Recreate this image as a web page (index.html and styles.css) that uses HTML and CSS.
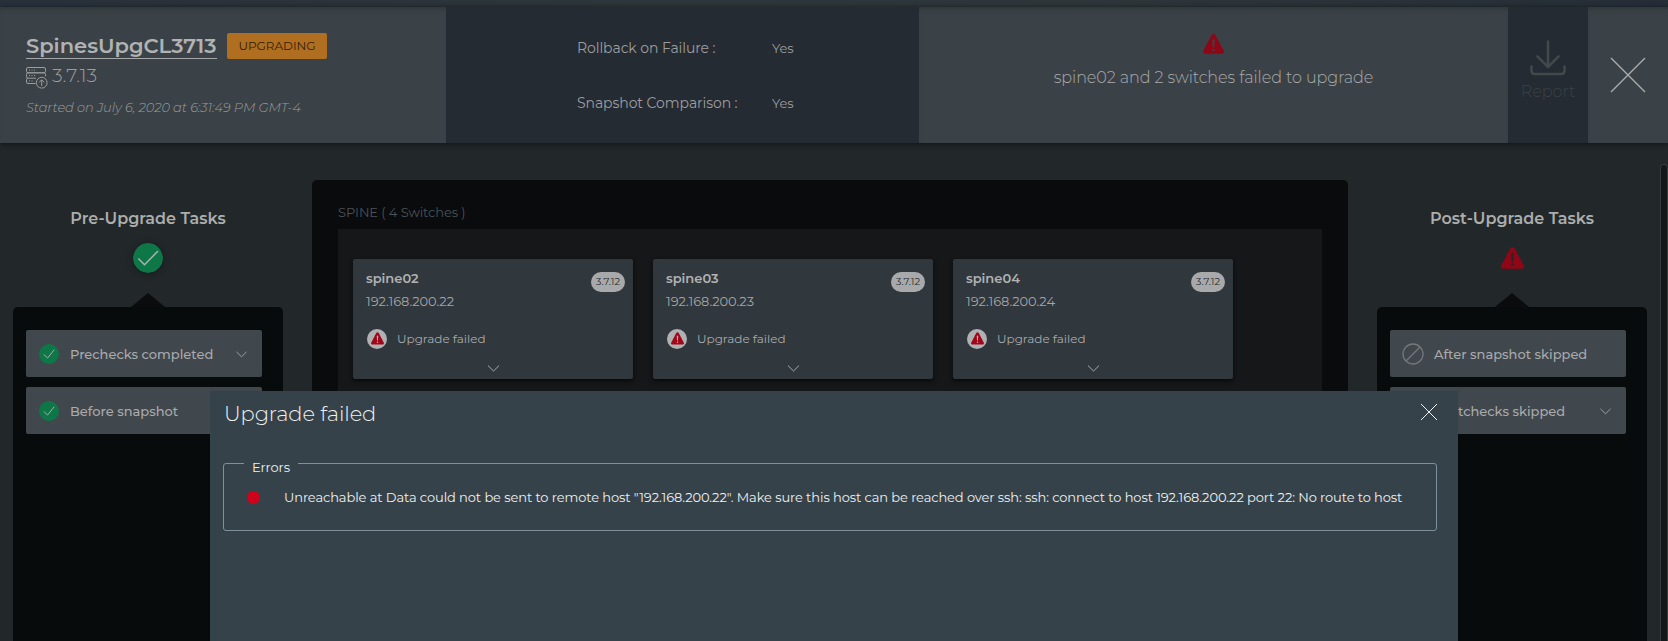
FILE: index.html
```html
<!DOCTYPE html>
<html lang="en">
<head>
<meta charset="utf-8">
<title>Upgrade job</title>
<link rel="stylesheet" href="styles.css">
</head>
<body>
<svg class="defs" width="0" height="0">
  <symbol id="warn" viewBox="0 0 22 21"><path fill="currentColor" fill-rule="evenodd" d="M8.9 1.3a2.4 2.4 0 0 1 4.2 0l8.6 16.2c.8 1.6-.2 3.2-2 3.2H2.3c-1.800 0-2.800-1.600-2-3.200zM9.800 6.600l.3 6.600a.9.9 0 0 0 1.800 0l.3-6.600a1.200 1.200 0 0 0-2.400 0zM11 15.400a1.300 1.300 0 1 0 0 2.600 1.300 1.300 0 0 0 0-2.600z"/></symbol>
  <symbol id="check" viewBox="0 0 30 30"><circle cx="15" cy="15" r="15" fill="#0d7748"/><path d="M5.800 16l5.700 5.800L24.500 8.500" fill="none" stroke="currentColor" stroke-width="1.500" stroke-linecap="round"/></symbol>
  <symbol id="check-sm" viewBox="0 0 20 20"><circle cx="10" cy="10" r="10" fill="#0d7748"/><path d="M5 10.700l3.600 3.300L15 6" fill="none" stroke="currentColor" stroke-width="1" stroke-linecap="round"/></symbol>
  <symbol id="chev" viewBox="0 0 12 7"><path d="M.5.6L6 6 11.500.6" fill="none" stroke="currentColor" stroke-width="1"/></symbol>
</svg>
<div class="page">
  <header class="header">
    <section class="job">
      <div class="job-top"><h1 class="job-name">SpinesUpgCL3713</h1><span class="status">UPGRADING</span></div>
      <div class="version">
        <svg width="22" height="22" viewBox="0 0 22 22" fill="none" stroke="currentColor" stroke-width="1"><rect x=".5" y=".5" width="19" height="5.300" rx="1.500"/><path d="M10 11.200H2A1.500 1.500 0 0 1 .5 9.700V7.300A1.500 1.500 0 0 1 2 5.800h16a1.500 1.500 0 0 1 1.500 1.500v2M9.500 16.500H2A1.500 1.500 0 0 1 .5 15v-2.300A1.500 1.500 0 0 1 2 11.200"/><path d="M3 3.200h1M5.500 3.200h1M8 3.200h1M3 8.500h1M5.500 8.500h1M8 8.500h1M3 13.900h1M5.500 13.900h1"/><circle cx="15.700" cy="15.700" r="5.400"/><path d="M15.700 19v-6M13.200 15.300l2.500-2.500 2.500 2.500"/></svg>
        <span>3.7.13</span>
      </div>
      <div class="started">Started on July 6, 2020 at 6:31:49 PM GMT-4</div>
    </section>
    <section class="options">
      <span>Rollback on Failure :</span><span class="yes">Yes</span>
      <span>Snapshot Comparison :</span><span class="yes">Yes</span>
    </section>
    <section class="result">
      <svg class="red" width="21" height="20"><use href="#warn"/></svg>
      <span class="result-text">spine02 and 2 switches failed to upgrade</span>
    </section>
    <section class="report">
      <svg width="36" height="36" viewBox="0 0 36 36" fill="none" stroke="currentColor" stroke-width="2.600" stroke-linecap="round" stroke-linejoin="round"><path d="M18 1.500v25M7.500 16.500L18 27l10.500-10.500M1.500 26.500V31a3 3 0 0 0 3 3h27a3 3 0 0 0 3-3v-4.500"/></svg>
      <span class="report-text">Report</span>
    </section>
    <section class="close"><svg width="36" height="36" viewBox="0 0 36 36" stroke="currentColor" stroke-width="1.400"><path d="M1 1l34 34M35 1L1 35"/></svg></section>
  </header>
  <main class="body">
    <aside class="side">
      <h2 class="side-title">Pre-Upgrade Tasks</h2>
      <svg class="state shadow" width="30" height="30"><use href="#check"/></svg>
      <div class="arrow"></div>
      <div class="tasks">
        <div class="task"><svg width="20" height="20"><use href="#check-sm"/></svg><span>Prechecks completed</span><svg class="chev" width="11" height="7"><use href="#chev"/></svg></div>
        <div class="task"><svg width="20" height="20"><use href="#check-sm"/></svg><span>Before snapshot</span></div>
      </div>
    </aside>
    <section class="group">
      <div class="group-title">SPINE ( 4 Switches )</div>
      <div class="switches">
        <article class="switch">
          <div class="row"><div><h3 class="name">spine02</h3><div class="ip">192.168.200.22</div></div><span class="pill">3.7.12</span></div>
          <div class="fail"><span class="dot"><svg width="13" height="13"><use href="#warn"/></svg></span><span>Upgrade failed</span></div>
          <svg class="more" width="13" height="7"><use href="#chev"/></svg>
        </article>
        <article class="switch">
          <div class="row"><div><h3 class="name">spine03</h3><div class="ip">192.168.200.23</div></div><span class="pill">3.7.12</span></div>
          <div class="fail"><span class="dot"><svg width="13" height="13"><use href="#warn"/></svg></span><span>Upgrade failed</span></div>
          <svg class="more" width="13" height="7"><use href="#chev"/></svg>
        </article>
        <article class="switch">
          <div class="row"><div><h3 class="name">spine04</h3><div class="ip">192.168.200.24</div></div><span class="pill">3.7.12</span></div>
          <div class="fail"><span class="dot"><svg width="13" height="13"><use href="#warn"/></svg></span><span>Upgrade failed</span></div>
          <svg class="more" width="13" height="7"><use href="#chev"/></svg>
        </article>
      </div>
    </section>
    <aside class="side">
      <h2 class="side-title">Post-Upgrade Tasks</h2>
      <div class="state red"><svg width="23" height="22"><use href="#warn"/></svg></div>
      <div class="arrow"></div>
      <div class="tasks">
        <div class="task"><svg class="skip" width="22" height="22" viewBox="0 0 22 22" fill="none" stroke="currentColor" stroke-width="1.300"><circle cx="11" cy="11" r="10"/><path d="M4 18L18 4"/></svg><span>After snapshot skipped</span></div>
        <div class="task"><svg class="skip" width="22" height="22" viewBox="0 0 22 22" fill="none" stroke="currentColor" stroke-width="1.300"><circle cx="11" cy="11" r="10"/><path d="M4 18L18 4"/></svg><span>Postchecks skipped</span><svg class="chev" width="11" height="7"><use href="#chev"/></svg></div>
      </div>
    </aside>
  </main>
  <div class="scroll"></div>
  <div class="modal">
    <div class="modal-head"><h2 class="modal-title">Upgrade failed</h2><svg width="18" height="18" viewBox="0 0 18 18" stroke="currentColor" stroke-width="1"><path d="M1 1l16 16M17 1L1 17"/></svg></div>
    <fieldset class="errors">
      <legend class="legend">Errors</legend>
      <div class="error"><span class="bullet"></span><span class="message">Unreachable at Data could not be sent to remote host "192.168.200.22". Make sure this host can be reached over ssh: ssh: connect to host 192.168.200.22 port 22: No route to host</span></div>
    </fieldset>
  </div>
</div>
</body>
</html>
```
FILE: styles.css
```css
* { box-sizing: border-box; }
body { margin: 0; background: #22272a; color: #a9aaab; font-family: Montserrat, Inter, "Open Sans", sans-serif; font-size: 13px; }
h1, h2, h3 { margin: 0; font-weight: 600; }
svg { display: block; flex: none; }
span, h1, h2, h3, legend, .started, .ip, .group-title { white-space: nowrap; }
.defs { position: absolute; }
.page { position: relative; height: 641px; overflow: hidden; padding-top: 7px; background: linear-gradient(90deg, #28313a 0%, #2d363a 35%, #2d373a 65%, #252e37 100%) top / 100% 7px no-repeat; }
.header { display: grid; grid-template-columns: 446px 473px 589px 80px 80px; height: 136px; background: #3b4247; box-shadow: 0 1px 5px #101416; }
.job, .result, .close { box-shadow: inset 0 5px 5px -4px #2c3236; }
.job { padding: 26px 0 0 26px; }
.job-top { display: flex; gap: 10px; height: 26px; }
.job-name { width: 191px; height: 26px; font-size: 21px; line-height: 26px; color: #b1b2b3; border-bottom: 1px solid #a5a7a8; }
.status { width: 100px; height: 26px; border-radius: 2px; background: #b06e20; color: #352006; font-size: 12px; line-height: 26px; text-align: center; }
.version { display: flex; gap: 4px; margin-top: 8px; height: 22px; color: #9b9d9f; font-size: 19px; font-weight: 300; line-height: 18px; }
.started { margin-top: 9px; font-style: italic; font-weight: 300; line-height: 18px; letter-spacing: -.09px; color: #999c9e; }
.options { display: grid; grid-template-columns: 195px auto; grid-template-rows: 55px 55px; align-items: center; padding: 13px 0 0 131px; background: #242b32; font-size: 14px; letter-spacing: -.08px; color: #9c9ea0; }
.yes { font-size: 13px; }
.result { display: flex; flex-direction: column; align-items: center; padding-top: 27px; }
.result-text { margin-top: 14px; font-size: 16px; font-weight: 300; line-height: 20px; letter-spacing: -.06px; }
.red { color: #8d0716; }
.report { display: flex; flex-direction: column; align-items: center; padding-top: 33px; background: #242b32; color: #42484b; }
.report-text { margin-top: 6px; font-size: 16px; font-weight: 300; line-height: 20px; color: #3b4147; }
.close { display: flex; align-items: center; justify-content: center; color: #a9abad; }
.body { display: grid; grid-template-columns: 270px 1036px 270px; gap: 29px; height: 498px; padding: 37px 0 0 13px; }
.side { display: flex; flex-direction: column; align-items: center; padding-top: 27px; }
.side-title { font-size: 16px; line-height: 24px; color: #acadad; }
.state { display: flex; align-items: center; height: 30px; margin-top: 12px; color: #b0b0b0; }
.state.red { color: #8d0716; }
.shadow { border-radius: 50%; box-shadow: 0 1px 6px #171b1d; }
.arrow { width: 34px; height: 14px; margin-top: 20px; background: #0a0c0d; clip-path: polygon(50% 0, 100% 100%, 0 100%); }
.tasks { align-self: stretch; flex: 1; padding: 23px 21px 0 13px; border-radius: 5px 5px 0 0; background: #080b0c; }
.task { display: flex; align-items: center; height: 47px; margin-bottom: 10px; padding: 0 15px 0 13px; border-radius: 2px; background: #40474d; font-weight: 500; font-size: 13px; color: #a9aaab; }
.task span { margin-left: 11px; }
.task .chev { margin-left: auto; margin-top: 2px; }
.task .skip { margin: 0 -1px 0 -1px; color: #75787a; }
.group { height: 480px; padding: 19px 26px 0; border-radius: 5px 5px 0 0; background: #090b0d; }
.group-title { height: 30px; line-height: 26px; letter-spacing: -.08px; color: #4b5156; }
.switches { display: flex; gap: 20px; height: 431px; padding: 30px 15px; background: #151718; }
.switch { width: 280px; height: 120px; padding: 9px 8px 0 13px; border-radius: 2px; background: #30373d; box-shadow: 0 2px 4px #08090a; }
.row { display: flex; justify-content: space-between; }
.name { font-size: 13px; line-height: 20px; color: #b1b2b3; }
.ip { margin-top: 3px; line-height: 20px; letter-spacing: -.05px; color: #a4a6a8; }
.pill { width: 34px; height: 20px; margin-top: 4px; border-radius: 10px; background: #a8a9aa; color: #292c2e; font-size: 10px; line-height: 20px; text-align: center; }
.fail { display: flex; align-items: center; gap: 10px; margin: 18px 0 0 1px; height: 20px; font-size: 12px; line-height: 18px; padding-bottom: 1px; }
.dot { display: flex; justify-content: center; align-items: center; width: 20px; height: 20px; border-radius: 50%; background: #b0b1b2; color: #a10619; }
.more { margin: 15.500px 0 0 120.500px; }
.scroll { position: absolute; left: 1660px; top: 164px; width: 8px; height: 477px; border: 1px solid #363b3e; border-bottom: 0; border-radius: 4px 4px 0 0; background: #141819; }
.modal { position: absolute; left: 210px; top: 391px; width: 1248px; height: 250px; padding: 8px 20px 0 13px; background: #364249; color: #eef0f1; }
.modal-head { display: flex; justify-content: space-between; padding: 0 0 0 1px; }
.modal-head svg { margin-top: 4px; }
.modal-title { font-size: 21px; line-height: 30px; font-weight: 300; letter-spacing: -.1px; }
.errors { width: 1214px; height: 78px; margin: 24px 0 0; padding: 0 23px; border: 1px solid #7e9099; border-radius: 3px; min-width: 0; }
.legend { height: 20px; margin-left: -3px; padding: 7px 8px 0; font-size: 13px; line-height: 14px; letter-spacing: -.1px; }
.error { display: flex; align-items: center; height: 49px; }
.bullet { flex: none; width: 13px; height: 13px; margin-right: 24px; border-radius: 50%; background: #d0021b; }
.message { padding-bottom: 2px; letter-spacing: -.087px; }
```
